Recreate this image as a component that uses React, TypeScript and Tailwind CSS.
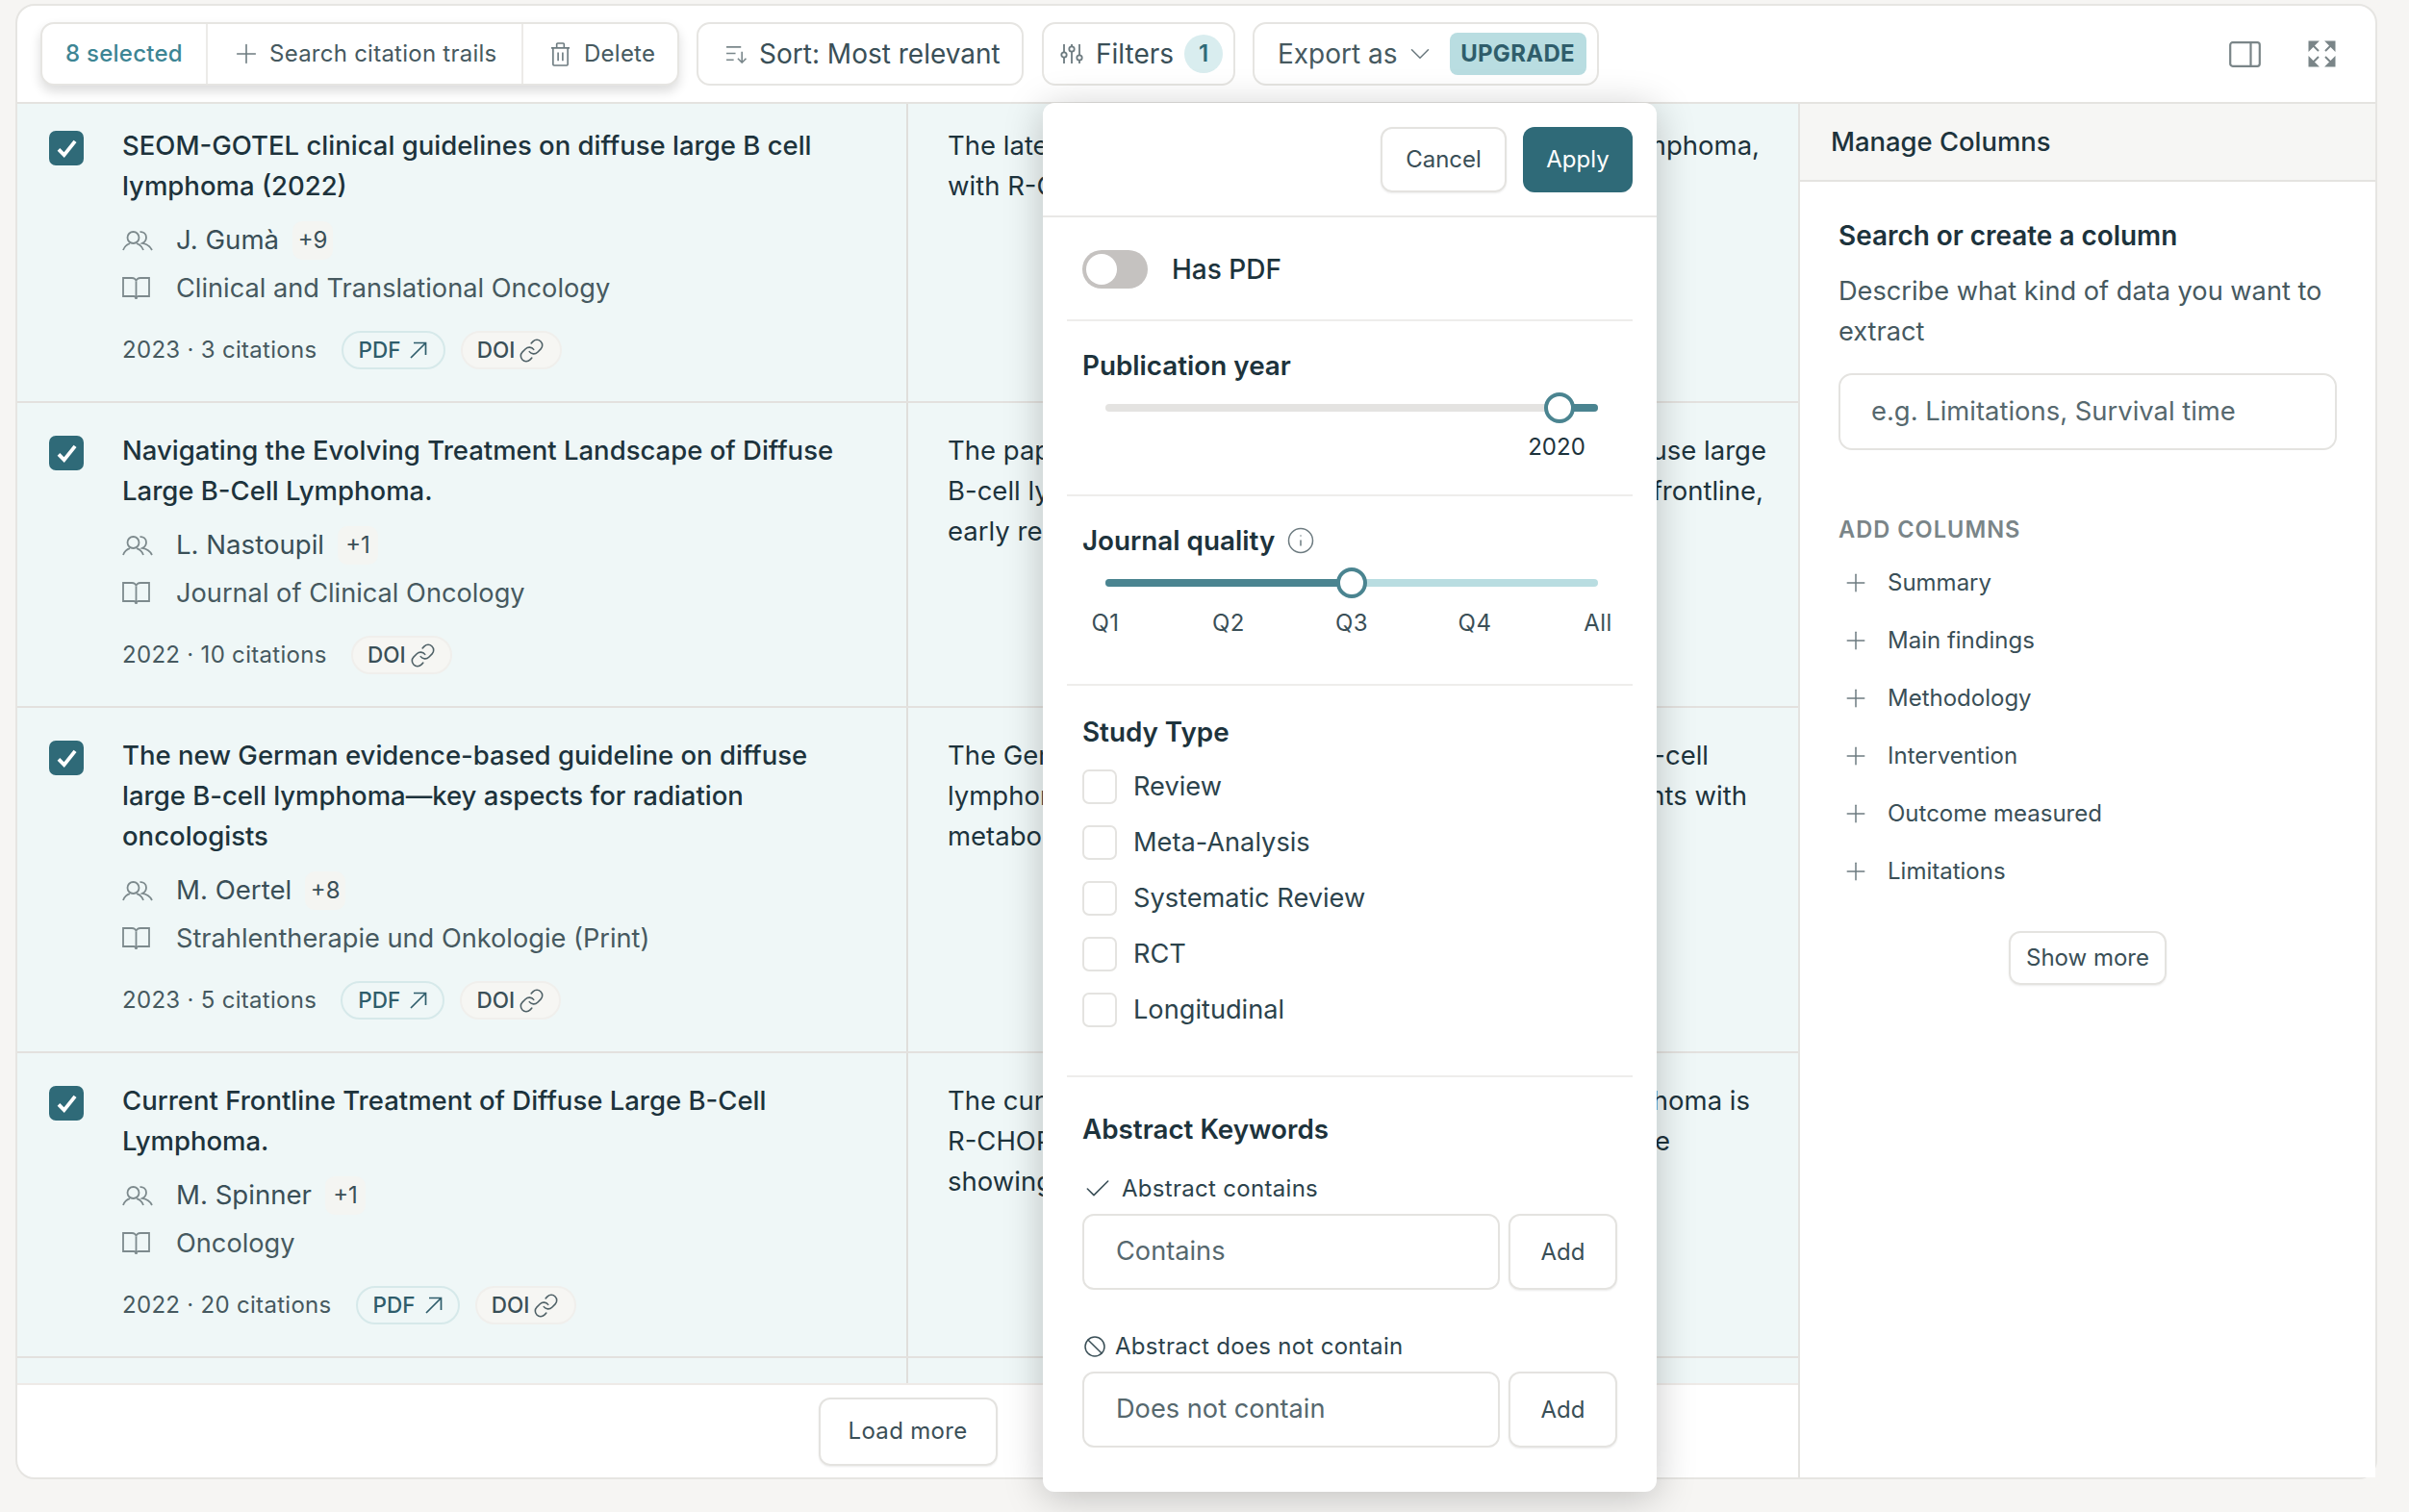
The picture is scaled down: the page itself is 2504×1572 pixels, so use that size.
import React from "react";
import { Plus, Link, Info, Check, Ban, ChevronDown } from "lucide-react";

type Line = { l: string; r?: string; w?: string };
type Row = {
  pad: string;
  title: string[];
  author: string;
  more: string;
  journal: string;
  meta: string;
  pdf: boolean;
  lines: Line[];
};

const rows: Row[] = [
  {
    pad: "pt-[22px]",
    title: ["SEOM-GOTEL clinical guidelines on diffuse large B cell", "lymphoma (2022)"],
    author: "J. Gumà",
    more: "+9",
    journal: "Clinical and Translational Oncology",
    meta: "2023 · 3 citations",
    pdf: true,
    lines: [
      { l: "The latest guidelines for", r: "diffuse large B-cell lymphoma,", w: "w-[844px]" },
      { l: "with R-CHOP as the standard first-line treatment" },
    ],
  },
  {
    pad: "pt-[28px]",
    title: ["Navigating the Evolving Treatment Landscape of Diffuse", "Large B-Cell Lymphoma."],
    author: "L. Nastoupil",
    more: "+1",
    journal: "Journal of Clinical Oncology",
    meta: "2022 · 10 citations",
    pdf: false,
    lines: [
      { l: "The paper discusses treating", r: "diffuse large", w: "w-[851px]" },
      { l: "B-cell lymphoma, with R-CHOP in the", r: "frontline,", w: "w-[848px]" },
      { l: "early relapse and later lines of therapy" },
    ],
  },
  {
    pad: "pt-[28px]",
    title: [
      "The new German evidence-based guideline on diffuse",
      "large B-cell lymphoma—key aspects for radiation",
      "oncologists",
    ],
    author: "M. Oertel",
    more: "+8",
    journal: "Strahlentherapie und Onkologie (Print)",
    meta: "2023 · 5 citations",
    pdf: true,
    lines: [
      { l: "The German guideline on", r: "large B-cell", w: "w-[791px]" },
      { l: "lymphoma recommends radiation for patients", r: "patients with", w: "w-[831px]" },
      { l: "metabolic residual disease after treatment" },
    ],
  },
  {
    pad: "pt-[28px]",
    title: ["Current Frontline Treatment of Diffuse Large B-Cell", "Lymphoma."],
    author: "M. Spinner",
    more: "+1",
    journal: "Oncology",
    meta: "2022 · 20 citations",
    pdf: true,
    lines: [
      { l: "The current treatment for", r: "large B-cell lymphoma is", w: "w-[834px]" },
      { l: "R-CHOP, with trials of newer agents for these", r: "the", w: "w-[751px]" },
      { l: "showing promising results in some patients" },
    ],
  },
];

const columns = ["Summary", "Main findings", "Methodology", "Intervention", "Outcome measured", "Limitations"];
const studies = ["Review", "Meta-Analysis", "Systematic Review", "RCT", "Longitudinal"];
const quarters = ["Q1", "Q2", "Q3", "Q4", "All"];

function UsersIcon() {
  return (
    <svg viewBox="0 0 32 21" className="w-[32px] h-[21px] shrink-0" fill="none" stroke="#7d8a8d" strokeWidth="1.8">
      <circle cx="11.500" cy="7" r="6" />
      <path d="M1 20c1.500-4 4.500-6 7-6.800M22 20c-1.500-4-4.500-6-7-6.800" />
      <path d="M18.500 1.200c3.500-.6 6.500 2 6.500 5.500 0 3-1.700 5-4 6.200 4 .6 8 3.100 10 7.100" />
    </svg>
  );
}

function BookIcon() {
  return (
    <svg viewBox="0 0 29 25" className="w-[29px] h-[25px] shrink-0" fill="none" stroke="#7d8a8d" strokeWidth="1.8">
      <path d="M1 1h9c2.500 0 4.500 1.500 4.500 3.500C14.500 2.500 16.500 1 19 1h9v19h-11c-1.200 0-2.500 1-2.500 3-0-2-1.300-3-2.500-3H1z" />
      <path d="M14.500 4.500V23" />
    </svg>
  );
}

function TrashIcon() {
  return (
    <svg viewBox="0 0 22 26" className="w-[21px] h-[25px]" fill="none" stroke="#6d7b80" strokeWidth="1.7">
      <path d="M1 6h20M3 6v18a1 1 0 0 0 1 1h14a1 1 0 0 0 1-1V6M7 6V2a1 1 0 0 1 1-1h6a1 1 0 0 1 1 1v4M8.500 11v9M13.500 11v9" />
    </svg>
  );
}

function SortIcon() {
  return (
    <svg viewBox="0 0 24 20" className="w-[23px] h-[19px]" fill="none" stroke="#7a878b" strokeWidth="1.7">
      <path d="M1 2h16M1 9h10M1 16h8M18 7v12M13.500 14.500 18 19l4.500-4.500" />
    </svg>
  );
}

function SlidersIcon() {
  return (
    <svg viewBox="0 0 24 22" className="w-[24px] h-[22px]" fill="none" stroke="#6d7b80" strokeWidth="1.8">
      <path d="M4 1v8M4 15v6M12 1v2M12 9v12M20 1v11M20 18v3" />
      <circle cx="4" cy="12" r="2.700" />
      <circle cx="12" cy="6" r="2.700" />
      <circle cx="20" cy="15" r="2.700" />
    </svg>
  );
}

function PanelIcon() {
  return (
    <svg viewBox="0 0 33 27" className="w-[33px] h-[27px]" fill="none" stroke="#7a8588" strokeWidth="2.200">
      <rect x="1.200" y="1.200" width="30.600" height="24.600" rx="2.500" />
      <path d="M22.500 1.200v24.600" />
    </svg>
  );
}

function ExpandIcon() {
  return (
    <svg viewBox="0 0 29 28" className="w-[29px] h-[28px]" fill="#7a8588" stroke="#7a8588" strokeWidth="2">
      <path d="M1.500 1.500h8l-8 8zM2 2l9 9" />
      <path d="M27.500 1.500h-8l8 8zM27 2l-9 9" />
      <path d="M1.500 26.500h8l-8-8zM2 26l9-9" />
      <path d="M27.500 26.500h-8l8-8zM27 26l-9-9" />
    </svg>
  );
}

function Toolbar() {
  return (
    <div className="h-[102px] shrink-0 flex items-center pl-[24px] pr-[41px] border-b-2 border-[#e4e3e0]">
      <div className="h-[66px] flex items-stretch rounded-[14px] border-2 border-[#e6e5e2] bg-white shadow-[0_6px_12px_rgba(0,0,0,0.14)] text-[24px] tracking-[0.25px] text-[#46595f]">
        <div className="w-[172px] flex items-center justify-center text-[#3d8594] font-medium border-r-2 border-[#ecebe8]">8 selected</div>
        <div className="w-[328px] flex items-center gap-[8px] pl-[24px] border-r-2 border-[#ecebe8]">
          <Plus className="w-[32px] h-[32px] text-[#6d7b80]" strokeWidth={1.2} />
          Search citation trails
        </div>
        <div className="w-[160px] flex items-center gap-[14px] pl-[28px]">
          <TrashIcon />
          Delete
        </div>
      </div>
      <div className="ml-[18px] w-[340px] h-[66px] flex items-center gap-[12px] pl-[28px] rounded-[14px] border-2 border-[#e6e5e2] text-[28px] text-[#3a4f57]">
        <SortIcon />
        Sort: Most relevant
      </div>
      <div className="ml-[19px] w-[201px] h-[66px] flex items-center gap-[13px] pl-[17px] rounded-[14px] border-2 border-[#e6e5e2] text-[28px] text-[#3a4f57]">
        <SlidersIcon />
        Filters
        <span className="w-[40px] h-[40px] -ml-[2px] rounded-full bg-[#d9edef] flex items-center justify-center text-[24px] font-semibold text-[#2f6a78]">1</span>
      </div>
      <div className="ml-[18px] w-[360px] h-[66px] flex items-center pl-[24px] rounded-[14px] border-2 border-[#e6e5e2] text-[28px] text-[#46595f]">
        Export as
        <ChevronDown className="ml-[6px] w-[34px] h-[34px] text-[#6d7b80]" strokeWidth={1.1} />
        <span className="ml-[14px] w-[142px] h-[44px] rounded-[8px] bg-[#b9dde1] flex items-center justify-center text-[24px] font-bold tracking-[0.3px] text-[#2f5d6b]">UPGRADE</span>
      </div>
      <div className="ml-auto flex items-center gap-[49px]">
        <PanelIcon />
        <ExpandIcon />
      </div>
    </div>
  );
}

function PaperRow({ row }: { row: Row }) {
  return (
    <div className="grid grid-cols-[926px_927px] bg-[#eff7f7] border-b-2 border-[#e3e1de]">
      <div className={`flex gap-[40px] pl-[33px] pr-[20px] pb-[33px] ${row.pad} border-r-2 border-[#dfdedb]`}>
        <span className="w-[36px] h-[36px] mt-[6px] shrink-0 rounded-[7px] bg-[#2f6a78] flex items-center justify-center">
          <svg viewBox="0 0 22 20" className="w-[21px] h-[19px]" fill="none" stroke="#ffffff" strokeWidth="4">
            <path d="M2 11l6 6L20 2" />
          </svg>
        </span>
        <div className="flex flex-col min-w-0">
          <div className="text-[27.5px] leading-[42px] font-medium text-[#1d333c] whitespace-nowrap">
            {row.title.map((t) => (
              <div key={t}>{t}</div>
            ))}
          </div>
          <div className="mt-[16px] h-[40px] flex items-center text-[27.6px] text-[#3a4f57]">
            <UsersIcon />
            <span className="ml-[24px]">{row.author}</span>
            <span className="ml-[14px] w-[42px] h-[40px] rounded-[10px] bg-[#f4f5f2] flex items-center justify-center text-[24px]">{row.more}</span>
          </div>
          <div className="mt-[10px] h-[40px] flex items-center text-[27.2px] text-[#46595f]">
            <BookIcon />
            <span className="ml-[27px]">{row.journal}</span>
          </div>
          <div className="mt-[24px] h-[40px] flex items-center gap-[25px] text-[24px] tracking-[0.3px] text-[#46595f]">
            <span>{row.meta}</span>
            <div className="flex items-center gap-[16px] tracking-normal">
              {row.pdf && (
                <span className="w-[108px] h-[40px] rounded-full border-2 border-[#d6e9ea] flex items-center justify-center gap-[10px] text-[22.500px] font-medium text-[#2f5d6b]">
                  PDF
                  <svg viewBox="0 0 18 18" className="w-[18px] h-[18px]" fill="none" stroke="#2f5d6b" strokeWidth="1.7">
                    <path d="M1 17 16.500 1.500M4 1.500h12.500V14" />
                  </svg>
                </span>
              )}
              <span className="w-[105px] h-[40px] rounded-full border-2 border-[#f0efec] bg-[#f6f6f3] flex items-center justify-center gap-[4px] text-[22.500px] font-medium text-[#3a4f57]">
                DOI
                <Link className="w-[27px] h-[27px] text-[#4f6167]" strokeWidth={1.4} />
              </span>
            </div>
          </div>
        </div>
      </div>
      <div className={`pl-[41px] ${row.pad} text-[27.5px] leading-[42px] text-[#1d333c] whitespace-nowrap overflow-hidden`}>
        {row.lines.map((line) => (
          <div key={line.l} className={`flex justify-between ${line.w ?? ""}`}>
            <span>{line.l}</span>
            {line.r && <span>{line.r}</span>}
          </div>
        ))}
      </div>
    </div>
  );
}

function Sidebar() {
  return (
    <aside className="w-[600px] shrink-0 border-l-2 border-[#e4e3e0] bg-white flex flex-col">
      <div className="h-[81px] shrink-0 bg-[#f6f6f4] border-b-2 border-[#e4e3e0] flex items-center pl-[32px] text-[27.4px] font-medium text-[#1d333c]">
        Manage Columns
      </div>
      <div className="pl-[40px] pr-[40px] pt-[35px] flex flex-col">
        <div className="text-[27.9px] leading-[42px] font-semibold text-[#1d333c]">Search or create a column</div>
        <div className="mt-[16px] text-[27.2px] leading-[42px] text-[#46595f]">Describe what kind of data you want to extract</div>
        <div className="mt-[22px] h-[80px] rounded-[14px] border-2 border-[#e4e3e0] flex items-center pl-[32px] text-[27.4px] text-[#56686e]">
          e.g. Limitations, Survival time
        </div>
        <div className="mt-[68px] text-[23.6px] leading-[30px] font-semibold tracking-[1px] text-[#7a8588]">ADD COLUMNS</div>
        <div className="mt-[10px] flex flex-col">
          {columns.map((c) => (
            <div key={c} className="h-[60px] flex items-center pl-[3px] gap-[18px] text-[24px] text-[#3a4f57]">
              <Plus className="w-[30px] h-[30px] text-[#6d7b80]" strokeWidth={1.2} />
              {c}
            </div>
          ))}
        </div>
        <div className="mt-[32px] self-center w-[164px] h-[56px] rounded-[12px] border-2 border-[#e4e3e0] shadow-[0_1px_2px_rgba(0,0,0,0.08)] flex items-center justify-center text-[24px] text-[#3a4f57]">
          Show more
        </div>
      </div>
    </aside>
  );
}

function Divider() {
  return <div className="mx-[25px] h-[2px] bg-[#eeedeb]" />;
}

function Thumb() {
  return <span className="absolute top-1/2 -translate-x-1/2 -translate-y-1/2 w-[32px] h-[32px] rounded-full bg-white border-[4px] border-[#4a8490]" />;
}

function KeywordInput({ placeholder }: { placeholder: string }) {
  return (
    <div className="mt-[11px] flex gap-[9px] pl-[41px]">
      <div className="w-[434px] h-[79px] rounded-[12px] border-2 border-[#e4e3e0] flex items-center pl-[33px] text-[27.2px] text-[#56686e]">{placeholder}</div>
      <div className="w-[113px] h-[79px] rounded-[12px] border-2 border-[#e4e3e0] shadow-[0_1px_2px_rgba(0,0,0,0.08)] flex items-center justify-center text-[24px] text-[#3a4f57]">Add</div>
    </div>
  );
}

function FilterPanel() {
  return (
    <div className="absolute left-[1066px] top-[101px] w-[638px] h-[1444px] z-10 rounded-[12px] bg-white shadow-[0_6px_40px_rgba(0,0,0,0.22)] text-[#1d333c]">
      <div className="h-[119px] border-b-2 border-[#e9e8e6] flex items-start justify-end gap-[17px] pt-[25px] pr-[25px]">
        <div className="w-[131px] h-[68px] rounded-[12px] border-2 border-[#e4e3e0] shadow-[0_1px_2px_rgba(0,0,0,0.08)] flex items-center justify-center text-[24px] text-[#3a4f57]">Cancel</div>
        <div className="w-[114px] h-[68px] rounded-[12px] bg-[#2f6a78] flex items-center justify-center text-[24px] text-white">Apply</div>
      </div>
      <div className="h-[106px] flex items-center pl-[41px] gap-[25px] pt-[2px]">
        <span className="w-[68px] h-[40px] rounded-full bg-[#c5c2c0] flex items-center pl-[4px]">
          <span className="w-[32px] h-[32px] rounded-full bg-white" />
        </span>
        <span className="text-[28px] font-medium">Has PDF</span>
      </div>
      <Divider />
      <div className="h-[180px] pl-[41px] pt-[28px]">
        <div className="text-[27.8px] leading-[36px] font-semibold">Publication year</div>
        <div className="relative ml-[24px] mt-[22px] w-[512px] h-[8px] rounded-full bg-[#e4e3e1]">
          <span className="absolute right-0 top-0 h-[8px] w-[40px] rounded-r-full bg-[#4a8490]" />
          <span className="absolute left-[472px] top-1/2"><Thumb /></span>
        </div>
        <div className="ml-[453px] mt-[22px] w-[80px] text-center text-[24px] leading-[30px]">2020</div>
      </div>
      <Divider />
      <div className="h-[195px] pl-[41px] pt-[28px]">
        <div className="flex items-center gap-[12px] text-[27.8px] leading-[36px] font-semibold">
          Journal quality
          <Info className="w-[30px] h-[30px] text-[#6d7b80]" strokeWidth={1.2} />
        </div>
        <div className="relative ml-[24px] mt-[22px] w-[512px] h-[8px] rounded-full bg-[#b9dde1]">
          <span className="absolute left-0 top-0 h-[8px] w-[256px] rounded-l-full bg-[#4a8490]" />
          <span className="absolute left-[256px] top-1/2"><Thumb /></span>
        </div>
        <div className="mt-[23px] ml-[4px] w-[552px] flex justify-between text-[24px] leading-[30px] text-[#3a4f57] tracking-[0.5px]">
          {quarters.map((q) => (
            <span key={q} className="w-[40px] text-center">{q}</span>
          ))}
        </div>
      </div>
      <Divider />
      <div className="h-[405px] pl-[41px] pt-[30px]">
        <div className="text-[27.8px] leading-[36px] font-semibold">Study Type</div>
        <div className="mt-[10px] flex flex-col">
          {studies.map((s) => (
            <div key={s} className="h-[58px] flex items-center gap-[17px] text-[27.2px] text-[#2c434c]">
              <span className="w-[36px] h-[36px] rounded-[7px] border-2 border-[#e4e3e0]" />
              {s}
            </div>
          ))}
        </div>
      </div>
      <Divider />
      <div className="pt-[36px]">
        <div className="pl-[41px] text-[27.8px] leading-[36px] font-semibold">Abstract Keywords</div>
        <div className="mt-[29px] pl-[41px] h-[30px] flex items-center gap-[9px] text-[24px] text-[#2c434c] tracking-[0.3px]">
          <Check className="w-[32px] h-[32px] text-[#3a4f57] shrink-0" strokeWidth={1.2} />
          Abstract contains
        </div>
        <KeywordInput placeholder="Contains" />
        <div className="mt-[44px] pl-[42px] h-[30px] flex items-center gap-[9px] text-[24px] text-[#2c434c] tracking-[0.3px]">
          <Ban className="w-[24px] h-[24px] text-[#3a4f57] shrink-0" strokeWidth={1.5} />
          Abstract does not contain
        </div>
        <KeywordInput placeholder="Does not contain" />
      </div>
    </div>
  );
}

export default function App() {
  return (
    <div className="h-[1572px] bg-[#f6f5f3] pt-[4px] pl-[16px] pr-[33px] pb-[34px] [font-family:Inter,'Liberation_Sans',sans-serif]">
      <div className="relative h-full rounded-[20px] border-2 border-[#e6e5e2] bg-white flex flex-col">
        <Toolbar />
        <div className="flex-1 min-h-0 flex">
          <main className="flex-1 min-w-0 flex flex-col">
            <div className="flex-1 min-h-0 overflow-hidden bg-[#eff7f7] border-b-2 border-[#eeeae7]">
              {rows.map((r) => (
                <PaperRow key={r.author} row={r} />
              ))}
              <div className="h-[40px] w-[926px] border-r-2 border-[#dfdedb]" />
            </div>
            <div className="h-[96px] shrink-0 flex items-center justify-center rounded-bl-[20px]">
              <div className="w-[186px] h-[71px] rounded-[12px] border-2 border-[#e4e3e0] shadow-[0_1px_2px_rgba(0,0,0,0.08)] flex items-center justify-center text-[24px] tracking-[0.3px] text-[#3a4f57]">Load more</div>
            </div>
          </main>
          <Sidebar />
        </div>
        <FilterPanel />
      </div>
    </div>
  );
}
